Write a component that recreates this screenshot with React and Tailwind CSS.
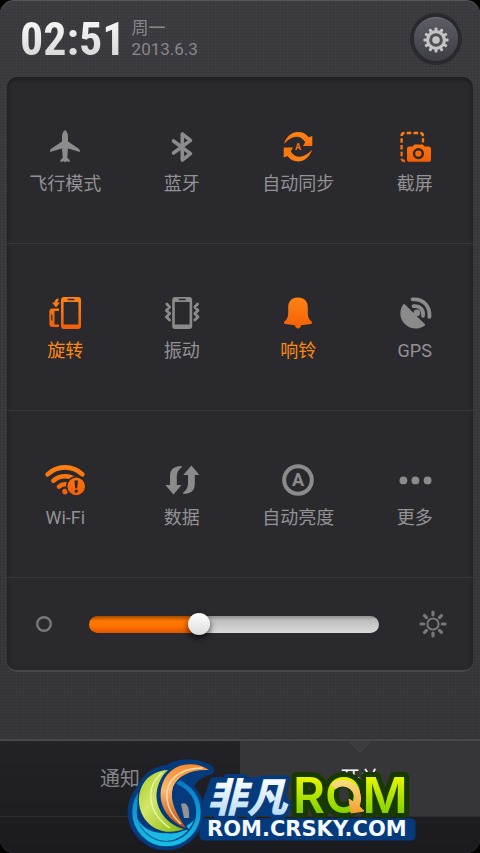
import { useState } from "react";

function Glyph({ children, className = "" }) {
  return (
    <svg aria-hidden="true" viewBox="0 0 40 40" className={`h-10 w-10 shrink-0 ${className}`}>
      {children}
    </svg>
  );
}

const ORANGE = "url(#orange)";
const GREY = "#8b8b8c";

function Airplane() {
  return (
    <Glyph>
      <path fill={GREY} d="M20 3C22 4.6 23 6.8 23 9.5V14.5L33.5 21.4C34.7 22.3 35 23.2 35 25L23 21.6L22.3 30.8L24.6 33V35L21.3 34.2L20 35.4L18.7 34.2L15.4 35V33L17.7 30.8L17 21.6L5 25C5 23.2 5.3 22.3 6.5 21.4L17 14.5V9.5C17 6.8 18 4.6 20 3Z" />
    </Glyph>
  );
}

function Bluetooth() {
  return (
    <Glyph>
      <path fill="none" stroke={GREY} strokeWidth="3.6" strokeLinecap="round" strokeLinejoin="round" d="M11.5 14L28.5 26.6L20.3 33V7L28.5 13.4L11.5 26" />
    </Glyph>
  );
}

function Sync() {
  const arrow = "M5.8 17C8.5 9 14 5 20 5C24.6 5 28 6.8 30.6 10.3L34.3 9V19H25L27.2 15C23.8 9.6 19.2 8.8 14.8 10.4C11 11.8 8.4 14.4 5.8 17Z";
  return (
    <Glyph>
      <path fill={ORANGE} d={arrow} />
      <path fill={ORANGE} d={arrow} transform="rotate(180 20 19.7)" />
      <text x="20" y="23" textAnchor="middle" fontSize="9" fontWeight="700" fontFamily="Roboto, sans-serif" fill="#f8720c">A</text>
    </Glyph>
  );
}

function Screenshot() {
  return (
    <Glyph>
      <path fill="none" stroke={ORANGE} strokeWidth="2.4" strokeDasharray="4.6 2.2" d="M10 34H9.5Q6.6 34 6.6 31V9Q6.6 6 9.5 6H25Q28 6 28 9V15.5" />
      <path fill={ORANGE} fillRule="evenodd" d="M14.5 19.6H17.6L19.4 17.4H27.8L29.6 19.6H33.4Q36 19.6 36 22.2V32.2Q36 34.8 33.4 34.8H14.5Q12 34.8 12 32.2V22.2Q12 19.6 14.5 19.6ZM23.4 21A5.6 5.6 0 1 0 23.4 32.2A5.6 5.6 0 1 0 23.4 21ZM23.4 23.4A3.2 3.2 0 1 1 23.4 29.8A3.2 3.2 0 1 1 23.4 23.4Z" />
    </Glyph>
  );
}

const phoneBody = "M19 3H33Q36 3 36 6V32Q36 35 33 35H19Q16 35 16 32V6Q16 3 19 3ZM18.6 8V30.6H33.4V8ZM22.6 4.8V6.2H29.4V4.8Z";

function Rotate() {
  return (
    <Glyph>
      <path fill={ORANGE} fillRule="evenodd" d={phoneBody} />
      <path fill={ORANGE} fillRule="evenodd" d="M14 14.4V17H9.5V30.4H14V33H7.6Q4.4 33 4.4 29.8V17.6Q4.4 14.4 7.6 14.4ZM6.2 20.6V26.6H7.4V20.6Z" />
      <path fill={ORANGE} d="M13.6 4.6V6.6Q12.4 6.8 12.4 8.4H15L11 13.4L7 8.4H9.6Q9.8 4.6 13.6 4.6Z" />
    </Glyph>
  );
}

function Vibrate() {
  return (
    <Glyph>
      <path fill={GREY} fillRule="evenodd" transform="translate(-5.8 0)" d={phoneBody} />
      <path fill="none" stroke={GREY} strokeWidth="2.8" strokeLinejoin="round" strokeLinecap="round" d="M4.8 10L7.6 13L4.4 16.4L7.6 19.6L4.4 23L7.6 26M35.6 10L32.8 13L36 16.4L32.8 19.6L36 23L32.8 26" />
    </Glyph>
  );
}

function Bell() {
  return (
    <Glyph>
      <path fill={ORANGE} d="M20 3.6C26.4 3.6 29.8 7.6 29.8 13.4V18.6C29.8 24 31.4 25.8 34 28V29.4C30.2 30.4 26.6 30.8 23.4 31C22.8 33 21.8 34.4 20 34.4C18.2 34.4 17.2 33 16.6 31C13.4 30.8 9.8 30.4 6 29.4V28C8.6 25.8 10.2 24 10.2 18.6V13.4C10.2 7.6 13.6 3.6 20 3.6Z" />
    </Glyph>
  );
}

function Gps() {
  return (
    <Glyph>
      <path fill={GREY} d="M9.8 10.2L18.8 19.2A3.2 3.2 0 1 1 21.6 22L30 30.2Q30.4 31.2 29.4 31.8C23.6 36 15.4 35.6 9.8 30C4.4 24.6 4 16.6 8.2 10.6Q9 9.6 9.8 10.2Z" />
      <path fill="none" stroke={GREY} strokeWidth="3.8" strokeLinecap="round" d="M18.6 12.2C24.6 11.2 29 15.8 28 21.8M17.6 5.4C28.4 4.6 35.2 12 34.4 22.8" />
    </Glyph>
  );
}

function Wifi() {
  return (
    <Glyph className="overflow-visible">
      <g fill="none" stroke={ORANGE} strokeWidth="4.6" strokeLinecap="round">
        <path d="M2.6 13.4C12.4 4 27.6 4 37.4 13.4" />
        <path d="M8.4 19.8C15 13.8 25 13.8 31.6 19.8" />
        <path d="M14 25.6C17.4 22.4 22.6 22.4 26 25.6" />
      </g>
      <circle cx="20" cy="30.6" r="2.8" fill={ORANGE} />
      <circle cx="31.2" cy="25.4" r="9.6" fill={ORANGE} stroke="#2a292e" strokeWidth="1.6" />
      <path fill="#2a292e" d="M29.4 19.4H33L32.2 27.2H30.2ZM31.2 28.4A1.7 1.7 0 1 1 31.2 31.8A1.7 1.7 0 1 1 31.2 28.4Z" />
    </Glyph>
  );
}

function Data() {
  const arrow = "M19.6 5V6.6C16 9 14.8 12 14.8 17V24H19.6L11.4 33.4L3.4 24H8V15C8 8.6 12 5 19.6 5Z";
  return (
    <Glyph>
      <path fill={GREY} d={arrow} />
      <path fill={GREY} d={arrow} transform="rotate(180 20.4 19)" />
    </Glyph>
  );
}

function AutoBrightness() {
  return (
    <Glyph>
      <circle cx="20" cy="19" r="13.8" fill="none" stroke={GREY} strokeWidth="4" />
      <text x="20" y="25" textAnchor="middle" fontSize="18" fontWeight="700" fontFamily="Roboto, sans-serif" fill={GREY}>A</text>
    </Glyph>
  );
}

function More() {
  return (
    <Glyph>
      <g fill={GREY}>
        <circle cx="8.4" cy="19.4" r="3.9" />
        <circle cx="20.4" cy="19.4" r="3.9" />
        <circle cx="32.6" cy="19.4" r="3.9" />
      </g>
    </Glyph>
  );
}

const rows = [
  [
    { label: "飞行模式", Icon: Airplane },
    { label: "蓝牙", Icon: Bluetooth },
    { label: "自动同步", Icon: Sync },
    { label: "截屏", Icon: Screenshot },
  ],
  [
    { label: "旋转", Icon: Rotate, active: true },
    { label: "振动", Icon: Vibrate },
    { label: "响铃", Icon: Bell, active: true },
    { label: "GPS", Icon: Gps },
  ],
  [
    { label: "Wi-Fi", Icon: Wifi },
    { label: "数据", Icon: Data },
    { label: "自动亮度", Icon: AutoBrightness },
    { label: "更多", Icon: More },
  ],
];

function Gradients() {
  return (
    <svg aria-hidden="true" className="absolute h-0 w-0">
      <defs>
        <linearGradient id="orange" gradientUnits="userSpaceOnUse" x1="0" y1="3" x2="0" y2="36">
          <stop offset="0" stopColor="#ff8413" />
          <stop offset="1" stopColor="#f35d06" />
        </linearGradient>
      </defs>
    </svg>
  );
}

function SettingsButton() {
  return (
    <button type="button" aria-label="设置" className="flex h-[52px] w-[52px] items-center justify-center rounded-full bg-[#2a2a2e]">
      <span className="flex h-11 w-11 items-center justify-center rounded-full border-t border-[#777780] bg-linear-to-b from-[#5c5c65] to-[#3e3e45]">
        <svg aria-hidden="true" viewBox="-14 -14 28 28" className="h-7 w-7" fill="#c4c4c6">
          {[0, 30, 60, 90, 120, 150].map((angle) => (
            <rect key={angle} x="-1.5" y="-12.6" width="3" height="25.2" rx="1" transform={`rotate(${angle})`} />
          ))}
          <circle r="10" />
          <circle r="6.8" fill="#4c4c54" />
          <circle r="3.8" />
        </svg>
      </span>
    </button>
  );
}

function Brightness() {
  const [value, setValue] = useState(37);
  const track = `linear-gradient(to bottom, #a34a00, #ff7800 30%, #fd7400 60%, #e05200) 0 0 / ${value}% 100% no-repeat, linear-gradient(to bottom, #8f8f8f, #bdbdbd 25%, #dadada)`;
  return (
    <div className="flex h-[92px] items-center pr-[26px] pl-[29px]">
      <svg aria-hidden="true" viewBox="0 0 16 16" className="h-4 w-4 shrink-0">
        <circle cx="8" cy="8" r="6.8" fill="none" stroke="#77767d" strokeWidth="2.4" />
      </svg>
      <input
        type="range"
        aria-label="亮度"
        min="0"
        max="100"
        value={value}
        onChange={(e) => setValue(Number(e.target.value))}
        style={{ "--track": track }}
        className="mr-10 ml-[37px] h-[22px] min-w-0 flex-1 cursor-pointer appearance-none bg-transparent [&::-webkit-slider-runnable-track]:h-[17px] [&::-webkit-slider-runnable-track]:rounded-full [&::-webkit-slider-runnable-track]:[background:var(--track)] [&::-webkit-slider-thumb]:-mt-[3px] [&::-webkit-slider-thumb]:h-[22px] [&::-webkit-slider-thumb]:w-[22px] [&::-webkit-slider-thumb]:appearance-none [&::-webkit-slider-thumb]:rounded-full [&::-webkit-slider-thumb]:bg-linear-to-b [&::-webkit-slider-thumb]:from-white [&::-webkit-slider-thumb]:to-[#dcdcdc] [&::-webkit-slider-thumb]:shadow-[0_3px_6px_rgba(0,0,0,0.7)]"
      />
      <svg aria-hidden="true" viewBox="-14 -14 28 28" className="h-7 w-7 shrink-0" fill="none" stroke="#77767d">
        <circle r="5.6" strokeWidth="2" />
        {[0, 45, 90, 135, 180, 225, 270, 315].map((angle) => (
          <path key={angle} d="M0 -9.2V-12" strokeWidth="3.2" strokeLinecap="round" transform={`rotate(${angle})`} />
        ))}
      </svg>
    </div>
  );
}

function RomLogo() {
  const cjk = "'Noto Sans CJK SC', sans-serif";
  const round = "Inter, 'Liberation Sans', sans-serif";
  const wide = "'DejaVu Sans', sans-serif";
  return (
    <svg viewBox="125 755 295 98" className="pointer-events-none absolute bottom-0 left-[125px] h-[98px] w-[295px]">
      <defs>
        <linearGradient id="leaf" x1="0" y1="0" x2="1" y2="1">
          <stop offset="0" stopColor="#a3cd22" />
          <stop offset="0.4" stopColor="#d3e66a" />
          <stop offset="1" stopColor="#86b80b" />
        </linearGradient>
        <linearGradient id="flame" x1="0" y1="0" x2="0" y2="1">
          <stop offset="0" stopColor="#f68a2c" />
          <stop offset="0.4" stopColor="#fbb973" />
          <stop offset="1" stopColor="#b94a0c" />
        </linearGradient>
        <linearGradient id="water" x1="0" y1="0" x2="0" y2="1">
          <stop offset="0" stopColor="#0a78c4" />
          <stop offset="1" stopColor="#12bfe6" />
        </linearGradient>
        <linearGradient id="ice" x1="0" y1="0" x2="0" y2="1">
          <stop offset="0.2" stopColor="#ffffff" />
          <stop offset="1" stopColor="#a9d4f5" />
        </linearGradient>
        <linearGradient id="lime" gradientUnits="userSpaceOnUse" x1="0" y1="778" x2="0" y2="814">
          <stop offset="0" stopColor="#e4f500" />
          <stop offset="1" stopColor="#7fd000" />
        </linearGradient>
        <linearGradient id="amber" gradientUnits="userSpaceOnUse" x1="0" y1="778" x2="0" y2="812">
          <stop offset="0" stopColor="#fbe08a" />
          <stop offset="1" stopColor="#f2a233" />
        </linearGradient>
      </defs>

      <g fill="#053a7c" stroke="#053a7c" strokeLinejoin="round">
        <circle cx="166" cy="812" r="38" />
        <path strokeWidth="10" d="M139 806C137 785 152 771 168 770C180 762 198 763 209 770C194 774 186 784 187 800Z" />
        <path strokeWidth="9" d="M204 823H411V836H204Z" />
        <path strokeWidth="8" d="M203 812L214 781H280L286 812Z" />
      </g>
      <circle cx="166.5" cy="812" r="32" fill="none" stroke="url(#water)" strokeWidth="4.5" />
      <path d="M136 816C144 836 173 840 194 820C184 847 148 850 136 816Z" fill="#19b9e4" />
      <path d="M181 804C186 801 190 806 189 818H184Z" fill="#929397" />
      <path stroke="#053a7c" strokeWidth="3" paintOrder="stroke" fill="url(#leaf)" d="M168 770C148 771 138 786 139 803C141 824 161 838 184 829C163 824 154 804 157 790C159 781 163 774 168 770Z" />
      <path fill="none" stroke="#eff5b1" strokeWidth="1.2" d="M162 773C146 786 146 812 170 828" />
      <path stroke="#053a7c" strokeWidth="3" paintOrder="stroke" fill="url(#flame)" d="M209 770C199 763 186 763 177 767C163 774 158 790 162 804C166 817 177 825 186 828C176 814 169 800 173 787C178 775 192 769 209 770Z" />
      <path fill="none" stroke="#ffe0b2" strokeWidth="1.4" d="M203 768C177 768 165 782 167 799C168 809 173 817 181 824" />

      <text x="207" y="812" fontFamily={cjk} fontSize="40" fontWeight="900" fontStyle="italic" fill="url(#ice)" stroke="#053a7c" strokeWidth="8" strokeLinejoin="round" paintOrder="stroke">非凡</text>
      <text x="293" y="813" fontFamily={round} fontSize="49" fontWeight="600" fill="url(#lime)" stroke="#173900" strokeWidth="10" strokeLinejoin="round" paintOrder="stroke">ROM</text>
      <path d="M333 787A15 15.4 0 0 1 356 806" fill="none" stroke="url(#amber)" strokeWidth="6.5" />
      <path d="M349 799L351 813L364 811L359 806Z" fill="url(#amber)" stroke="url(#amber)" strokeLinejoin="round" />
      <path fill="none" stroke="#053a7c" strokeWidth="4" d="M206 820.5H410" />
      <text x="207" y="836" fontFamily={wide} fontSize="21" fontWeight="700" fill="#f4f8ff">ROM.CRSKY.COM</text>
    </svg>
  );
}

export default function App() {
  return (
    <div className="min-h-screen bg-black [font-family:Roboto,'Noto_Sans_CJK_SC',sans-serif]">
      <Gradients />
      <div className="flex min-h-screen flex-col overflow-hidden rounded-[14px] border-t border-[#55555a] bg-[#38373c] bg-[image:repeating-linear-gradient(90deg,rgba(0,0,0,0.07)_0_1px,transparent_1px_3px),repeating-linear-gradient(0deg,rgba(0,0,0,0.07)_0_1px,transparent_1px_3px),linear-gradient(180deg,#3e3d42,#38373c)]">
        <header className="flex h-[76px] items-center justify-between pr-[18px] pl-5">
          <div className="flex items-center gap-1.5">
            <time className="bg-linear-to-b from-white to-[#d0d0d0] bg-clip-text text-[46px] leading-[56px] font-bold text-transparent [font-family:'Liberation_Sans_Narrow','Roboto_Condensed','Open_Sans_Condensed',Roboto,sans-serif]">
              02:51
            </time>
            <div className="text-[17px] leading-[21px] text-[#88878c]">
              <p>周一</p>
              <p>2013.6.3</p>
            </div>
          </div>
          <SettingsButton />
        </header>

        <main className="mx-[7px] rounded-[10px] border-b-2 border-[#48474c] bg-[#2a292e] shadow-[inset_0_2px_5px_rgba(0,0,0,0.35)]">
          {rows.map((row) => (
            <div key={row[0].label} className="grid h-[167px] grid-cols-4 border-b border-[#37363b]">
              {row.map(({ label, Icon, active }) => (
                <button key={label} type="button" className={`flex flex-col items-center gap-1 pt-[50px] ${active ? "text-[#ff8a0c]" : "text-[#929294]"}`}>
                  <Icon />
                  <span className="text-lg leading-[26px]">{label}</span>
                </button>
              ))}
            </div>
          ))}
          <Brightness />
        </main>

        <footer className="relative mt-auto border-t-2 border-[#48474b] bg-linear-to-b from-[#232327] to-[#1b1b1f]">
          <nav className="grid h-[76px] grid-cols-2 border-b border-[#2d2d31] text-xl">
            <button type="button" className="text-[#858589]">通知</button>
            <button type="button" className="bg-[#363639] text-white">开关</button>
          </nav>
          <div className="h-9" />
          <svg aria-hidden="true" viewBox="0 0 24 12" className="absolute top-0 left-3/4 h-3 w-6 -translate-x-1/2">
            <path d="M1 0L12 11L23 0" fill="#3c3b40" stroke="#46454a" />
          </svg>
          <RomLogo />
        </footer>
      </div>
    </div>
  );
}
